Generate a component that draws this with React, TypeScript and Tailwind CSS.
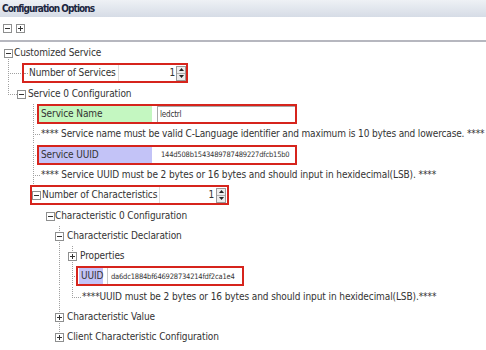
import React from "react";

const font = "font-['Liberation_Sans_Narrow','DejaVu_Sans_Condensed','Liberation_Sans',sans-serif]";

type Lead = {
  w: number;
  v?: number[];
  top?: number[];
  bottom?: number[];
  h?: [number, number][];
  box?: { x: number; open: boolean };
};

function Expander({ open }: { open: boolean }) {
  return (
    <svg width="9" height="9" viewBox="0 0 9 9" className="shrink-0">
      <rect x="0.5" y="0.5" width="8" height="8" fill="#fff" stroke="#8e8f8f" />
      <path d="M2 4.5h5" stroke="#333" />
      {!open && <path d="M4.5 2v5" stroke="#333" />}
    </svg>
  );
}

function TreeLines({ w, v = [], top = [], bottom = [], h = [], box }: Lead) {
  const dot = { stroke: "#a0a0a0", strokeDasharray: "1 1" };
  return (
    <svg width={w} height="20" className="shrink-0">
      {v.map((x) => (
        <line key={"v" + x} x1={x + 0.5} y1="0" x2={x + 0.5} y2="20" {...dot} />
      ))}
      {top.map((x) => (
        <line key={"t" + x} x1={x + 0.5} y1="0" x2={x + 0.5} y2="10" {...dot} />
      ))}
      {bottom.map((x) => (
        <line key={"b" + x} x1={x + 0.5} y1="10" x2={x + 0.5} y2="20" {...dot} />
      ))}
      {h.map(([a, b]) => (
        <line key={"h" + a} x1={a} y1="10.5" x2={b} y2="10.5" {...dot} />
      ))}
      {box && (
        <g transform={`translate(${box.x} 6)`}>
          <rect x="0.5" y="0.5" width="8" height="8" fill="#fff" stroke="#8e8f8f" />
          <path d="M2 4.5h5" stroke="#333" />
          {!box.open && <path d="M4.5 2v5" stroke="#333" />}
        </g>
      )}
    </svg>
  );
}

function Row({ lead, children }: { lead: Lead; children?: React.ReactNode }) {
  return (
    <div className="flex h-[20.3px] items-center whitespace-nowrap">
      <TreeLines {...lead} />
      {children}
    </div>
  );
}

function Spinner() {
  return (
    <div className="flex h-[15px] w-[10px] shrink-0 flex-col border border-[#9a9a9a] bg-[#ececec]">
      <div className="flex flex-1 items-center justify-center border-b border-[#b0b0b0]">
        <svg width="5" height="3" viewBox="0 0 5 3">
          <path d="M0 3L2.5 0L5 3Z" fill="#222" />
        </svg>
      </div>
      <div className="flex flex-1 items-center justify-center">
        <svg width="5" height="3" viewBox="0 0 5 3">
          <path d="M0 0L2.5 3L5 0Z" fill="#222" />
        </svg>
      </div>
    </div>
  );
}

export default function App() {
  return (
    <div className={`h-[350px] w-[486px] overflow-hidden bg-white text-[10px] leading-none tracking-[-0.1px] ${font}`}>
      <div className="flex h-[17px] items-center bg-gradient-to-b from-[#eef1f5] to-[#d6dce6] pl-[2px]">
        <span className="text-[10px] font-bold tracking-[-0.95px] text-[#1c2740]">Configuration Options</span>
      </div>
      <div className="flex h-[23px] items-center gap-[4px] pl-[3px]">
        <Expander open />
        <Expander open={false} />
      </div>
      <div className="h-[2px] bg-[#b6b7bf]" />
      <div className="pt-[1px] text-[#333]">
        <Row lead={{ w: 14, bottom: [8], box: { x: 4, open: true } }}>
          <span>Customized Service</span>
        </Row>
        <Row lead={{ w: 22, v: [8], h: [[8, 22]] }}>
          <div className="flex h-[20px] w-[166px] items-center border-2 border-[#d6241c]">
            <div className="h-px w-[4px] shrink-0 border-t border-dotted border-[#a0a0a0]" />
            <span className="w-[90px] shrink-0 pl-[1px]">Number of Services</span>
            <div className="flex h-full flex-1 items-center justify-end border-l border-[#dcdcdc] pr-[1px]">
              <span>1</span>
            </div>
            <Spinner />
          </div>
        </Row>
        <Row lead={{ w: 28, top: [8], bottom: [33], h: [[8, 17]], box: { x: 17, open: true } }}>
          <span>Service 0 Configuration</span>
        </Row>
        <Row lead={{ w: 37, v: [33], h: [[33, 37]] }}>
          <div className="flex h-[20px] w-[260px] items-center border-2 border-[#d6241c]">
            <div className="flex h-full w-[113px] shrink-0 items-center bg-[#c4f7c1] pl-[2px]">Service Name</div>
            <div className="ml-[5px] flex h-full flex-1 items-center border-t border-l border-[#a8a8a8] pl-[2px] text-[8px] tracking-[-0.2px]">
              ledctrl
            </div>
          </div>
        </Row>
        <Row lead={{ w: 41, v: [33], h: [[33, 40]] }}>
          <span className="tracking-[-0.15px]">
            **** Service name must be valid C-Language identifier and maximum is 10 bytes and lowercase. ****
          </span>
        </Row>
        <Row lead={{ w: 37, v: [33], h: [[33, 37]] }}>
          <div className="flex h-[20px] w-[260px] items-center border-2 border-[#d6241c]">
            <div className="flex h-full w-[113px] shrink-0 items-center bg-[#c3c3f7] pl-[2px]">Service UUID</div>
            <div className="ml-[5px] flex h-full flex-1 items-center pl-[4px] text-[7.5px] tracking-[-0.2px]">
              144d508b1543489787489227dfcb15b0
            </div>
          </div>
        </Row>
        <Row lead={{ w: 41, v: [33], h: [[33, 40]] }}>
          <span>**** Service UUID must be 2 bytes or 16 bytes and should input in hexidecimal(LSB). ****</span>
        </Row>
        <Row lead={{ w: 30, top: [33] }}>
          <div className="flex h-[20px] w-[199px] items-center border-2 border-[#d6241c]">
            <Expander open />
            <span className="w-[118px] shrink-0 pl-[1px]">Number of Characteristics</span>
            <div className="flex h-full flex-1 items-center justify-end border-l border-[#dcdcdc] pr-[2px]">
              <span>1</span>
            </div>
            <Spinner />
            <div className="w-[1px] shrink-0" />
          </div>
        </Row>
        <Row lead={{ w: 55, bottom: [59], box: { x: 46, open: true } }}>
          <span>Characteristic 0 Configuration</span>
        </Row>
        <Row lead={{ w: 67, v: [59], box: { x: 55, open: true } }}>
          <span>Characteristic Declaration</span>
        </Row>
        <Row lead={{ w: 80, v: [59, 72], h: [[72, 77]], box: { x: 68, open: false } }}>
          <span>Properties</span>
        </Row>
        <Row lead={{ w: 76, v: [59, 72], h: [[72, 76]] }}>
          <div className="flex h-[20px] w-[168px] items-center border-2 border-[#d6241c]">
            <div className="ml-[1px] flex h-full w-[24px] shrink-0 items-center bg-[#c3c3f7] pl-[2px]">UUID</div>
            <div className="ml-[4px] flex h-full flex-1 items-center border-l border-[#c8c8c8] pl-[3px] text-[7.5px] tracking-[-0.2px]">
              da6dc1884bf646928734214fdf2ca1e4
            </div>
          </div>
        </Row>
        <Row lead={{ w: 82, v: [59], top: [72], h: [[72, 81]] }}>
          <span>****UUID must be 2 bytes or 16 bytes and should input in hexidecimal(LSB).****</span>
        </Row>
        <Row lead={{ w: 67, v: [59], box: { x: 55, open: false } }}>
          <span>Characteristic Value</span>
        </Row>
        <Row lead={{ w: 67, top: [59], box: { x: 55, open: false } }}>
          <span>Client Characteristic Configuration</span>
        </Row>
      </div>
    </div>
  );
}
